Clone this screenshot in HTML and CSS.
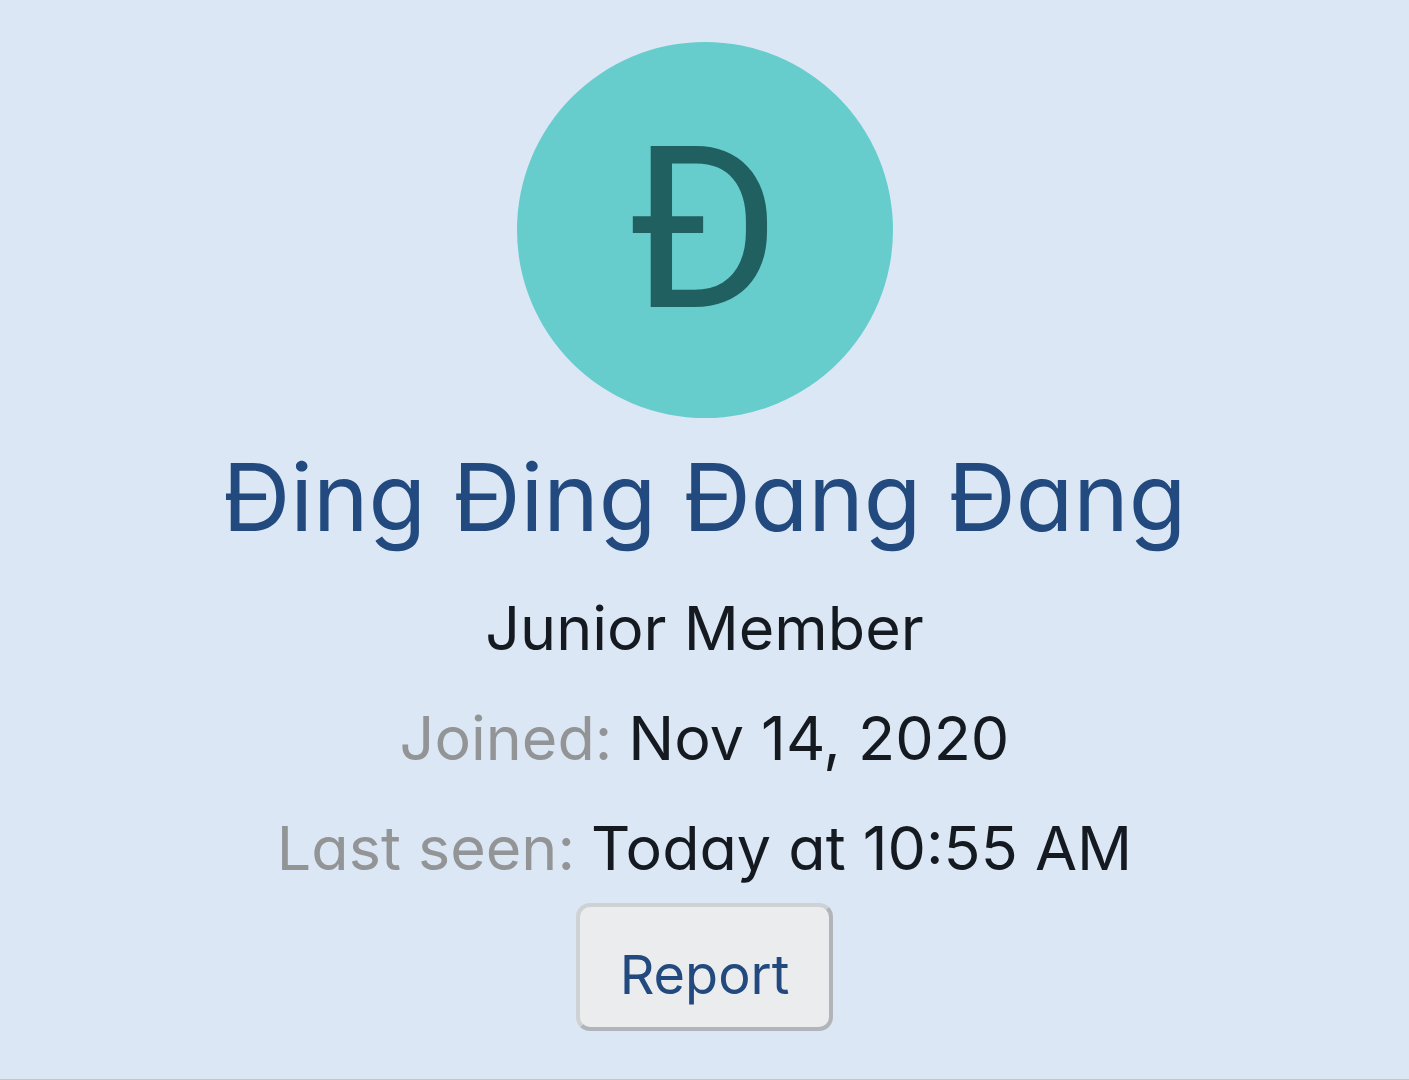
FILE: index.html
```html
<!DOCTYPE html>
<html lang="en">
<head>
<meta charset="utf-8">
<meta name="viewport" content="width=device-width, initial-scale=1">
<title>Member profile</title>
<link rel="stylesheet" href="styles.css">
</head>
<body>
<main class="profile">
  <a class="avatar" href="#" aria-label="Đing Đing Đang Đang"><span class="avatar-letter">Đ</span></a>
  <h1 class="name"><a href="#">Đing Đing Đang Đang</a></h1>
  <p class="title">Junior Member</p>
  <dl class="details">
    <div class="pair"><dt>Joined:</dt><dd>Nov 14, 2020</dd></div>
    <div class="pair"><dt>Last seen:</dt><dd>Today at 10:55 AM</dd></div>
  </dl>
  <button class="report" type="button">Report</button>
</main>
</body>
</html>
```

FILE: styles.css
```css
* {
  box-sizing: border-box;
}

body {
  margin: 0;
  background: #dbe7f5;
  color: #141a20;
  font-family: Inter, "Liberation Sans", sans-serif;
  font-feature-settings: "cv11";
}

.profile {
  display: flex;
  flex-direction: column;
  align-items: center;
  min-height: 100vh;
  padding: 42px 24px 48px;
  border-bottom: 1px solid #c0c6ce;
  text-align: center;
}

.avatar {
  display: flex;
  align-items: center;
  justify-content: center;
  width: 376px;
  height: 376px;
  border-radius: 50%;
  background: #66cccc;
  color: #206060;
  font-family: Roboto, sans-serif;
  font-size: 226px;
  line-height: 1;
  text-decoration: none;
}

.name {
  margin: 15px 0 0;
  font-size: 94px;
  font-weight: 400;
  line-height: 128px;
}

.name a {
  color: #224a7e;
  text-decoration: none;
}

.title,
.details {
  margin: 0;
  font-size: 61px;
  line-height: 110px;
}

.title {
  margin-top: 12px;
}

.pair {
  display: flex;
  flex-wrap: wrap;
  justify-content: center;
  gap: 0 16px;
}

.pair dt {
  color: #929496;
}

.pair dd {
  margin: 0;
}

.report {
  padding: 32px 40px 16px;
  border: 4px solid;
  border-color: #cfd2d5 #b1b5ba #b1b5ba #cfd2d5;
  border-radius: 14px;
  background: #ebeced;
  color: #224a7e;
  font-family: inherit;
  font-feature-settings: inherit;
  font-size: 54px;
  line-height: 72px;
}
```
